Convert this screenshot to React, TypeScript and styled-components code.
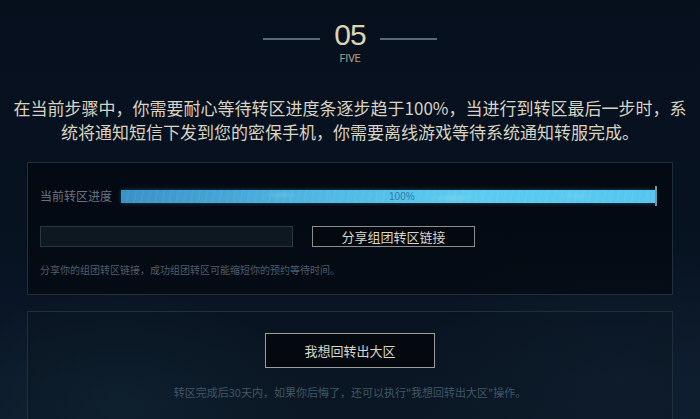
import styled, { createGlobalStyle } from "styled-components";

const GlobalStyle = createGlobalStyle`
  html, body {
    margin: 0;
    padding: 0;
    background: #07111e;
  }
  * {
    box-sizing: border-box;
  }
`;

const Page = styled.div`
  width: 700px;
  height: 419px;
  overflow: hidden;
  font-family: "Noto Sans CJK SC", "Liberation Sans", sans-serif;
  background:
    radial-gradient(ellipse 260px 160px at 120px 400px, rgba(40, 90, 110, 0.18), transparent 70%),
    radial-gradient(ellipse 300px 200px at 620px 380px, rgba(40, 70, 100, 0.16), transparent 70%),
    linear-gradient(180deg, #06101d 0%, #071221 55%, #0c1a29 100%);
  padding-top: 20px;
`;

const StepHead = styled.div`
  display: flex;
  justify-content: center;
  align-items: flex-start;
  gap: 14px;
`;

const Rule = styled.span`
  width: 57px;
  height: 2px;
  margin-top: 18px;
  background: #5a6977;
`;

const StepNumber = styled.div`
  font-family: "Liberation Sans", sans-serif;
  font-size: 30px;
  line-height: 30px;
  letter-spacing: -1px;
  color: #ddd4b4;
`;

const StepWord = styled.div`
  margin-top: 3px;
  text-align: center;
  font-family: Roboto, "Liberation Sans", sans-serif;
  font-size: 11px;
  line-height: 12px;
  letter-spacing: -0.3px;
  color: #a8a08a;
`;

const Intro = styled.p`
  margin: 31px 0 0;
  text-align: center;
  font-size: 17px;
  line-height: 24px;
  color: #dad3c1;
  white-space: nowrap;
`;

const Panel = styled.section<{ $dark?: boolean }>`
  margin: ${({ $dark }) => ($dark ? "18px" : "16px")} 27px 0;
  border: 1px solid #1f2f3b;
  background: ${({ $dark }) => ($dark ? "rgba(0, 0, 0, 0.42)" : "rgba(6, 14, 24, 0.25)")};
`;

const ProgressPanel = styled(Panel)`
  padding: 26px 16px 17px 12px;
`;

const ActionPanel = styled(Panel)`
  padding-top: 21px;
  height: 140px;
  display: flex;
  flex-direction: column;
  align-items: center;
`;

const ProgressRow = styled.div`
  display: flex;
  align-items: center;
  gap: 9px;
  height: 14px;
`;

const Label = styled.span`
  font-size: 12px;
  line-height: 14px;
  color: #66747f;
  white-space: nowrap;
`;

const Track = styled.div`
  position: relative;
  flex: 1;
  height: 13px;
  background: #0b1a25;
`;

const Fill = styled.div`
  height: 100%;
  background:
    radial-gradient(ellipse 18px 4px at 30% 40%, rgba(255, 255, 255, 0.12), transparent),
    radial-gradient(ellipse 24px 4px at 62% 60%, rgba(255, 255, 255, 0.12), transparent),
    radial-gradient(ellipse 20px 4px at 85% 45%, rgba(255, 255, 255, 0.1), transparent),
    repeating-linear-gradient(100deg, rgba(255, 255, 255, 0.035) 0 2px, transparent 2px 7px),
    linear-gradient(90deg, #3a92c4 0%, #4fb6e2 35%, #5ccbef 65%, #55c6ee 100%);
  box-shadow: 0 0 4px rgba(80, 190, 240, 0.35);
`;

const Percent = styled.span`
  position: absolute;
  left: 268px;
  top: 0;
  font-family: "Liberation Sans", sans-serif;
  font-size: 10px;
  line-height: 13px;
  color: #2b7eab;
`;

const EndTick = styled.span`
  position: absolute;
  right: -1px;
  top: -4px;
  width: 2px;
  height: 20px;
  background: #7d96a6;
`;

const ShareRow = styled.div`
  display: flex;
  gap: 19px;
  margin-top: 23px;
`;

const LinkField = styled.div`
  width: 253px;
  height: 21px;
  background: #0d191f;
  border: 1px solid #28383f;
`;

const OutlineButton = styled.button<{ $big?: boolean }>`
  width: ${({ $big }) => ($big ? "170px" : "163px")};
  height: ${({ $big }) => ($big ? "35px" : "21px")};
  padding: 0;
  background: #04080f;
  border: 1px solid ${({ $big }) => ($big ? "#9d9d9a" : "#8e8e8c")};
  color: #dcd6c6;
  font-family: "Noto Sans CJK SC", sans-serif;
  font-size: 13px;
  line-height: 19px;
  cursor: pointer;
`;

const Hint = styled.div<{ $center?: boolean }>`
  margin-top: ${({ $center }) => ($center ? "17px" : "16px")};
  font-size: ${({ $center }) => ($center ? "11px" : "10px")};
  line-height: 14px;
  color: ${({ $center }) => ($center ? "#415666" : "#4e5d69")};
  text-align: ${({ $center }) => ($center ? "center" : "left")};
  white-space: nowrap;
`;

export default function App() {
  return (
    <Page>
      <GlobalStyle />
      <StepHead>
        <Rule />
        <StepNumber>05</StepNumber>
        <Rule />
      </StepHead>
      <StepWord>FIVE</StepWord>

      <Intro>
        在当前步骤中，你需要耐心等待转区进度条逐步趋于100%，当进行到转区最后一步时，系
        <br />
        统将通知短信下发到您的密保手机，你需要离线游戏等待系统通知转服完成。
      </Intro>

      <ProgressPanel $dark>
        <ProgressRow>
          <Label>当前转区进度</Label>
          <Track>
            <Fill style={{ width: "100%" }} />
            <Percent>100%</Percent>
            <EndTick />
          </Track>
        </ProgressRow>
        <ShareRow>
          <LinkField />
          <OutlineButton>分享组团转区链接</OutlineButton>
        </ShareRow>
        <Hint>分享你的组团转区链接，成功组团转区可能缩短你的预约等待时间。</Hint>
      </ProgressPanel>

      <ActionPanel>
        <OutlineButton $big>我想回转出大区</OutlineButton>
        <Hint $center>转区完成后30天内，如果你后悔了，还可以执行"我想回转出大区"操作。</Hint>
      </ActionPanel>
    </Page>
  );
}
